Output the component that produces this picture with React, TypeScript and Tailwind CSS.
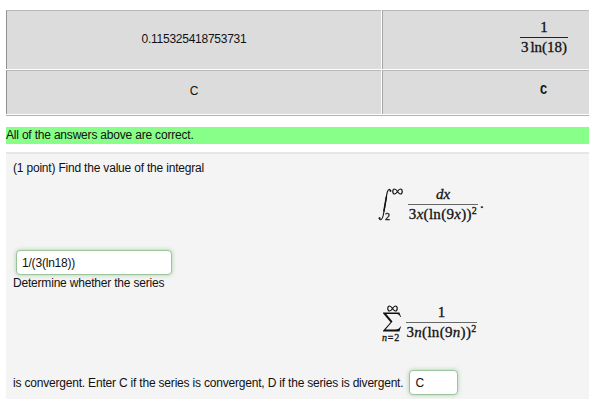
import React, { useState } from "react";

interface FractionProps {
    top: React.ReactNode;
    bottom: React.ReactNode;
    barClass: string;
    className?: string;
}

const Fraction: React.FC<FractionProps> = ({ top, bottom, barClass, className = "" }) => (
    <span className={`flex flex-col items-center ${className}`}>
        <span className="h-[18px] leading-4">{top}</span>
        <span className={`w-full ${barClass}`} />
        <span className="h-[18px] leading-[18px] whitespace-nowrap">{bottom}</span>
    </span>
);

// Denominator shared by the integral and the series: 3v(ln(9v))^2
const LogSquared: React.FC<{ variable: string }> = ({ variable }) => (
    <span className="tracking-[0.3px]">
        3<i>{variable}</i>(ln(9<i>{variable}</i>))
        <sup className="text-[10px] top-[-5px] leading-none">2</sup>
    </span>
);

const Infinity: React.FC = () => (
    <svg width="11" height="7" viewBox="0 0 11 7" fill="none" stroke="#111" strokeWidth="1.2">
        <path d="M5.5 3.5C4.4 1.9 3.6 1 2.6 1C1.5 1 .8 2 .8 3.5S1.5 6 2.6 6C3.6 6 4.4 5.1 5.5 3.5S7.4 1 8.4 1S10.2 2 10.2 3.5S9.5 6 8.4 6S6.6 5.1 5.5 3.5Z" />
    </svg>
);

const IntegralSign: React.FC = () => (
    <svg width="14" height="33" viewBox="0 0 14 33" fill="none" stroke="#111" strokeLinecap="round">
        <path d="M12.5 2.7C11.8 .7 10.2 .9 9.3 4C8.2 8 6.8 20 5.2 27.5C4.4 31.2 2.5 33 1.2 30.6" strokeWidth="1.1" />
        <path d="M8.4 9L5.9 23" strokeWidth="1.5" />
        <circle cx="12.3" cy="2.9" r=".5" fill="#111" />
        <circle cx="1.4" cy="30.1" r=".5" fill="#111" />
    </svg>
);

const SumSign: React.FC = () => (
    <svg width="20" height="20" viewBox="0 0 20 20" fill="#111">
        <path d="M1 .5H17.4L19 5H18.3C17.4 2.5 16 2 13 2H4.3L10.5 9.6L3.6 17.4H13C16.2 17.4 17.5 16.8 18.4 14.6H19L17.4 19.5H1V18.7L8.5 10.3L1 1.2Z" />
    </svg>
);

const cellBase = "flex items-center bg-[#dcdcdc] border-l border-t border-t-[#b8b8b8]";
const mathText = "font-['Liberation_Serif',serif] text-[15px] tracking-normal text-[#111] [-webkit-text-stroke:0.3px_#111]";
const answerBox =
    "rounded-[4px] border border-[#9bc49b] bg-white text-[12px] tracking-[-0.2px] text-[#111] outline-none shadow-[0_0_4px_rgba(110,180,110,0.55)]";

const App: React.FC = () => {
    const [integral, setIntegral] = useState("1/(3(ln18))");
    const [series, setSeries] = useState("C");

    return (
        <div className="h-[406px] w-[599px] overflow-hidden bg-white pt-[10px] pl-[6px] font-['Liberation_Sans',sans-serif] text-[12px] tracking-[-0.195px] text-[#111]">
            <div className="grid w-[583px] grid-cols-[375px_207px] grid-rows-[59px_44px] gap-x-px gap-y-px border-b border-[#b2b2b2] pb-px">
                <div className={`${cellBase} justify-center border-l-[#909090] pb-[3px] tracking-[-0.26px]`}>0.115325418753731</div>
                <div className={`${cellBase} border-l-[#a5a5a5] pb-[5px] pl-[137px]`}>
                    <Fraction
                        className={`${mathText} w-[48px]`}
                        top="1"
                        bottom={<>3<span className="ml-[2px]">ln(18)</span></>}
                        barClass="h-px bg-[#222]"
                    />
                </div>
                <div className={`${cellBase} justify-center border-l-[#909090] pb-[3px]`}>C</div>
                <div className={`${cellBase} border-l-[#a5a5a5] pb-[3px] pl-[157px] font-['Liberation_Mono',monospace] font-bold`}>C</div>
            </div>

            <div className="mt-[11px] h-[17px] w-[583px] bg-[#88ff88] leading-[16px]">All of the answers above are correct.</div>

            <div className="mt-2 flex h-[247px] w-[583px] flex-col border-t-2 border-[#e6e6e6] bg-[#f4f4f4] pl-[7px]">
                <p className="mt-[6px] h-4 leading-4">(1 point) Find the value of the integral</p>

                <div className={`mt-[12px] flex h-[36px] pl-[365px] ${mathText}`}>
                    <IntegralSign />
                    <span className="flex h-[34px] w-[16px] flex-col justify-between">
                        <Infinity />
                        <span className="-ml-[7px] text-[10px] leading-[10px]">2</span>
                    </span>
                    <Fraction
                        className="-mt-[2px] w-[70px]"
                        top={<i>dx</i>}
                        bottom={<LogSquared variable="x" />}
                        barClass="h-px bg-[#666]"
                    />
                    <span className="ml-[2px] mt-[4px]">.</span>
                </div>

                <div className="mt-[26px] pl-[3px]">
                    <input
                        aria-label="Value of the integral"
                        value={integral}
                        onChange={(e) => setIntegral(e.target.value)}
                        className={`${answerBox} block h-[25px] w-[156px] px-[5px]`}
                    />
                </div>
                <p className="h-4 leading-4">Determine whether the series</p>

                <div className={`mt-[14px] flex h-[38px] pl-[369px] ${mathText}`}>
                    <span className="flex w-[24px] flex-col">
                        <span className="ml-[5px] flex h-[7px]"><Infinity /></span>
                        <SumSign />
                        <span className="mt-px whitespace-nowrap text-[10px] leading-[10px] tracking-[0.8px]"><i>n</i>=2</span>
                    </span>
                    <Fraction
                        className="-mt-px w-[71px]"
                        top="1"
                        bottom={<LogSquared variable="n" />}
                        barClass="h-px bg-[#666]"
                    />
                </div>

                <div className="mt-[27px] flex items-center">
                    <span>is convergent. Enter C if the series is convergent, D if the series is divergent.</span>
                    <input
                        aria-label="Convergence of the series"
                        value={series}
                        onChange={(e) => setSeries(e.target.value)}
                        className={`${answerBox} ml-[6px] h-[25px] w-[49px] px-[5px]`}
                    />
                </div>
            </div>
        </div>
    );
};

export default App;
